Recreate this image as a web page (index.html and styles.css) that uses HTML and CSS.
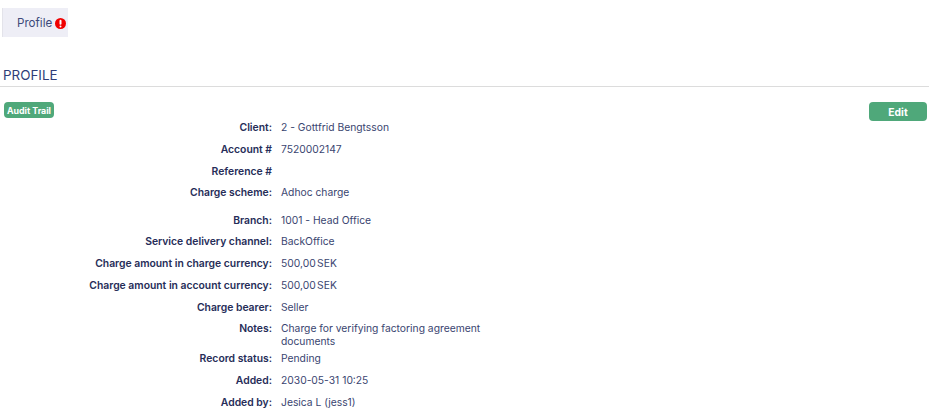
FILE: index.html
```html
<!DOCTYPE html>
<html lang="en">
<head>
<meta charset="utf-8">
<title>Profile</title>
<link rel="stylesheet" href="styles.css">
</head>
<body>
<nav class="tabs">
  <div class="tab">Profile<svg class="alert" width="11" height="11" viewBox="0 0 11 11"><circle cx="5.5" cy="5.5" r="5.5" fill="#f00000"/><rect x="4.5" y="1.8" width="2" height="5" rx="1" fill="#fff"/><circle cx="5.5" cy="8.5" r="1" fill="#fff"/></svg></div>
</nav>
<h1 class="title">PROFILE</h1>
<section class="content">
  <div class="actions">
    <button class="btn btn-small">Audit Trail</button>
    <button class="btn btn-edit">Edit</button>
  </div>
  <dl class="details">
    <div class="row"><dt>Client:</dt><dd>2 - Gottfrid Bengtsson</dd></div>
    <div class="row"><dt>Account #</dt><dd>7520002147</dd></div>
    <div class="row"><dt>Reference #</dt><dd></dd></div>
    <div class="row row-tall"><dt>Charge scheme:</dt><dd>Adhoc charge</dd></div>
    <div class="row"><dt>Branch:</dt><dd>1001 - Head Office</dd></div>
    <div class="row"><dt>Service delivery channel:</dt><dd>BackOffice</dd></div>
    <div class="row"><dt>Charge amount in charge currency:</dt><dd class="amount">500,00 SEK</dd></div>
    <div class="row"><dt>Charge amount in account currency:</dt><dd class="amount">500,00 SEK</dd></div>
    <div class="row"><dt>Charge bearer:</dt><dd>Seller</dd></div>
    <div class="row row-notes"><dt>Notes:</dt><dd>Charge for verifying factoring agreement documents</dd></div>
    <div class="row"><dt>Record status:</dt><dd>Pending</dd></div>
    <div class="row"><dt>Added:</dt><dd>2030-05-31 10:25</dd></div>
    <div class="row"><dt>Added by:</dt><dd>Jesica L (jess1)</dd></div>
  </dl>
</section>
</body>
</html>
```
FILE: styles.css
```css
* { box-sizing: border-box; }
html, body { margin: 0; padding: 0; }
body {
  font-family: Inter, "Liberation Sans", sans-serif;
  font-size: 10.3px;
  color: #2c3563;
  background: #fff;
  height: 412px;
  overflow: hidden;
}
.tabs { display: flex; padding: 8px 0 0 2px; }
.tab {
  display: flex;
  align-items: center;
  width: 66px;
  height: 29px;
  padding: 0 0 0 14px;
  background: #eeeef6;
  border-left: 1px solid #e3e3ea;
  font-size: 11.6px;
  color: #3d4a7a;
}
.alert { margin: 2px 0 0 3px; flex: none; }
.title {
  margin: 30px 0 0;
  padding: 0 0 3px 3px;
  height: 20px;
  border-bottom: 1px solid #dcdcdc;
  font-size: 13.4px;
  font-weight: 400;
  line-height: 16px;
  color: #2f3d78;
}
.content { padding: 15px 2px 0 4px; }
.actions { display: flex; justify-content: space-between; align-items: flex-start; height: 19px; }
.btn {
  border: 0;
  background: #4fa87a;
  color: #fff;
  font-family: inherit;
  font-weight: 700;
  border-radius: 4px;
  padding: 0;
}
.btn-small { width: 50px; height: 16px; font-size: 8.8px; }
.btn-edit { width: 58px; height: 19px; font-size: 10.3px; }
.details { margin: -4px 0 0 -1px; }
.row { display: flex; height: 21.75px; align-items: center; }
.row-tall { height: 27px; padding-bottom: 6px; }
.row-notes { height: 30px; align-items: flex-start; padding-top: 4px; }
.row dt {
  width: 269px;
  text-align: right;
  font-size: 10.36px;
  line-height: 13px;
  font-weight: 600;
  color: #262d58;
  flex: none;
}
.row dd {
  margin: 0 0 0 9px;
  width: 215px;
  line-height: 13px;
  color: #3a4570;
}
.row .amount { word-spacing: -1.5px; }
```
